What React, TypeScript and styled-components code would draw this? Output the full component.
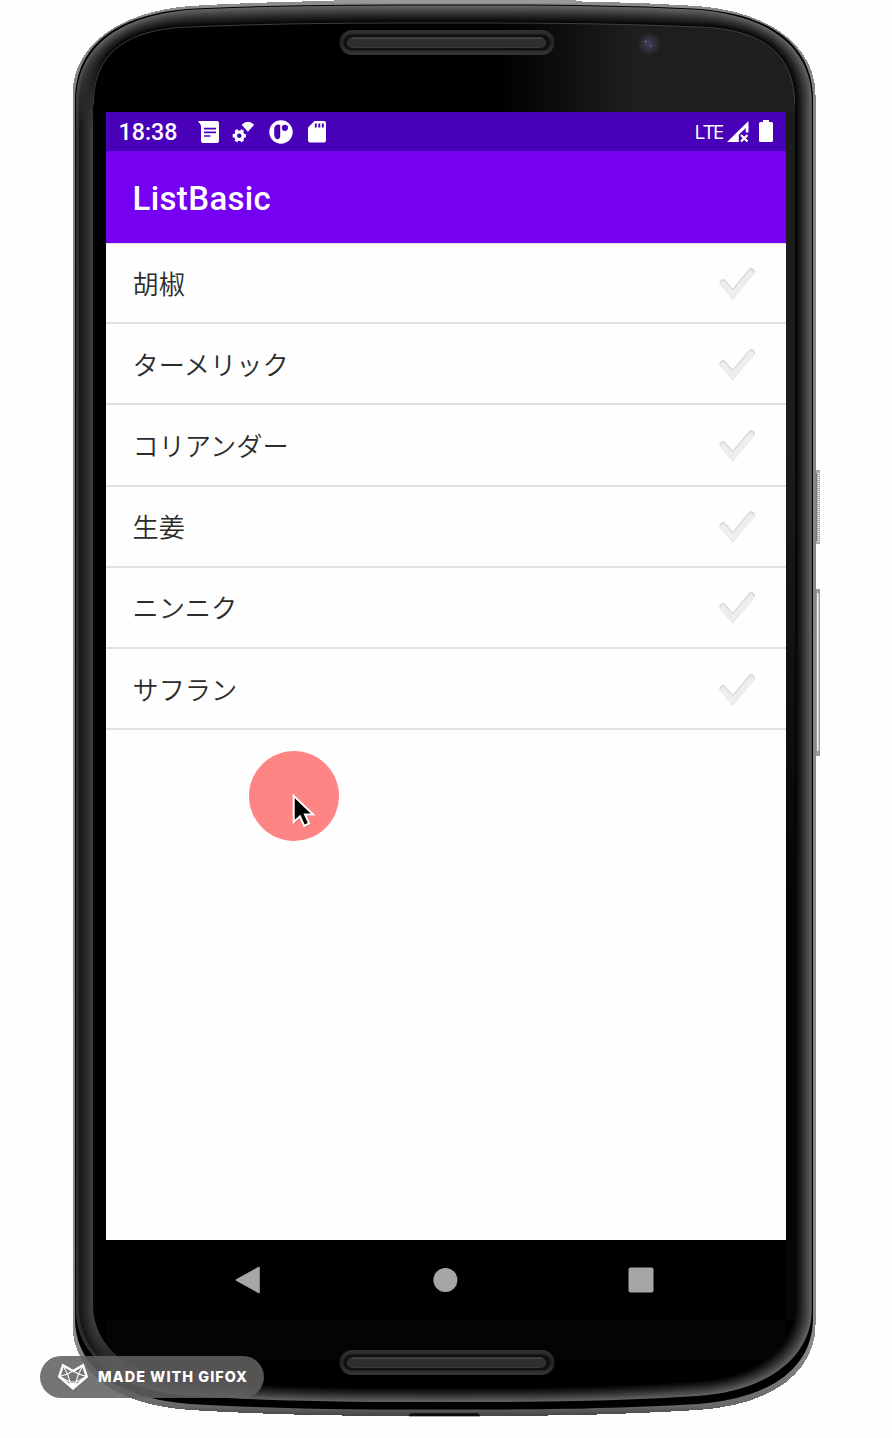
import React from "react";
import styled, { createGlobalStyle } from "styled-components";

const GlobalStyle = createGlobalStyle`
  *, *::before, *::after { box-sizing: border-box; }
  html, body { margin: 0; padding: 0; background: #fefefe; }
`;

const Stage = styled.main`
  position: relative;
  width: 892px;
  height: 1438px;
  padding: 112px 106px 0;
  overflow: hidden;
  background: #fefefe;
`;

const DeviceArt = styled.svg`
  position: absolute;
  inset: 0;
  pointer-events: none;
`;

const Screen = styled.div`
  position: relative;
  display: flex;
  flex-direction: column;
  width: 680px;
  height: 1208px;
  background: #fefefe;
  font-family: Roboto, "Noto Sans CJK JP", sans-serif;
`;

const StatusBar = styled.header`
  display: flex;
  align-items: center;
  flex: 0 0 39px;
  padding: 0 13px 0 12px;
  background: #4800b8;
  color: #fff;
`;

const Clock = styled.span`
  width: 60px;
  padding-top: 1px;
  font-size: 23.2px;
  font-weight: 500;
  line-height: 38px;
  text-indent: 0.6px;
  white-space: nowrap;
`;

const StatusIcons = styled.div`
  display: flex;
  align-items: center;
  gap: 13.5px;
  margin-left: 19.5px;
`;

const SignalGroup = styled.div`
  display: flex;
  align-items: center;
  margin-left: auto;
`;

const Network = styled.span`
  margin-right: 4px;
  font-family: "Open Sans", "Noto Sans", sans-serif;
  font-size: 20.5px;
  line-height: 38px;
  padding-bottom: 1px;
  letter-spacing: -1.7px;
`;

const AppBar = styled.div`
  display: flex;
  align-items: center;
  flex: 0 0 92px;
  padding: 3px 26.6px 0;
  background: #7600f2;
  color: #fff;
`;

const Title = styled.h1`
  margin: 0;
  font-size: 33px;
  font-weight: 500;
  line-height: 40px;
  letter-spacing: 0.35px;
`;

const List = styled.ul`
  flex: 1;
  margin: 0;
  padding: 0;
  list-style: none;
  box-shadow: inset 0 2px 1px -1px #dcdcdc;
`;

const Item = styled.li`
  display: flex;
  align-items: center;
  justify-content: space-between;
  height: 81.2px;
  padding: 0 30px 0 26.5px;
  border-bottom: 2px solid #e1e1e1;
  color: #2c2c2c;
  font-family: "Noto Sans CJK JP", sans-serif;
  font-size: 26.2px;
  font-weight: 350;
  line-height: 38px;
`;

const NavBar = styled.nav`
  display: flex;
  align-items: center;
  justify-content: center;
  gap: 170.5px;
  flex: 0 0 80px;
  padding: 0 3px 1px 0;
  background: #000;
`;

const Pointer = styled.div`
  position: absolute;
  left: 249px;
  top: 751px;
  width: 90px;
  height: 90px;
  border-radius: 50%;
  background: #ff8585;
`;

const Cursor = styled.svg`
  position: absolute;
  left: 40px;
  top: 38px;
`;

const Watermark = styled.div`
  position: absolute;
  left: 40px;
  top: 1356px;
  display: flex;
  align-items: center;
  width: 224px;
  height: 42px;
  padding: 0 0 1px 17px;
  border-radius: 21px;
  background: rgba(96, 96, 96, 0.87);
  color: #fff;
  font-family: Inter, sans-serif;
  font-size: 14.4px;
  font-weight: 800;
  letter-spacing: 1.03px;
  white-space: nowrap;
`;

const FoxLogo = styled.svg`
  flex: none;
  margin-right: 9px;
`;

const CX = 444;

type Shape = {
  l: number; yt: number; a: number; bx: number; by: number; sx: number; sy: number; top: number;
  yb: number; c: number; dx: number; dy: number; ey: number; bot: number;
};

const body: Shape = { l: 72.5, yt: 95, a: 48, bx: 115, by: 12, sx: 190, sy: 6, top: 0.5, yb: 1325, c: 1370, dx: 113, dy: 1405, ey: 1410, bot: 1416 };
const seam: Shape = { l: 75, yt: 100, a: 48, bx: 113, by: 13, sx: 195, sy: 8.5, top: 4.5, yb: 1318, c: 1365, dx: 113, dy: 1398, ey: 1404, bot: 1409.5 };
const rim: Shape = { l: 76.2, yt: 101, a: 50, bx: 115, by: 14.5, sx: 195, sy: 9.5, top: 5.5, yb: 1310, c: 1355, dx: 118, dy: 1391, ey: 1396, bot: 1402 };
const glass: Shape = { l: 93, yt: 105, a: 58, bx: 120, by: 29, sx: 190, sy: 27, top: 23, yb: 1305, c: 1345, dx: 128, dy: 1377, ey: 1381, bot: 1388 };

function outline(s: Shape) {
  const m = (x: number) => 2 * CX - x;
  return [
    `M${s.l} ${s.yt}`,
    `C${s.l} ${s.a} ${s.bx} ${s.by} ${s.sx} ${s.sy}`,
    `C280 ${s.top} 360 ${s.top} ${CX} ${s.top}`,
    `C${m(360)} ${s.top} ${m(280)} ${s.top} ${m(s.sx)} ${s.sy}`,
    `C${m(s.bx)} ${s.by} ${m(s.l)} ${s.a} ${m(s.l)} ${s.yt}`,
    `V${s.yb}`,
    `C${m(s.l)} ${s.c} ${m(s.dx)} ${s.dy} ${m(190)} ${s.ey}`,
    `C${m(290)} ${s.bot} ${m(360)} ${s.bot} ${CX} ${s.bot}`,
    `C360 ${s.bot} 290 ${s.bot} 190 ${s.ey}`,
    `C${s.dx} ${s.dy} ${s.l} ${s.c} ${s.l} ${s.yb}`,
    "Z",
  ].join(" ");
}

function between(a: Shape, b: Shape, t: number): Shape {
  const out = {} as Shape;
  (Object.keys(a) as (keyof Shape)[]).forEach((k) => {
    out[k] = a[k] + (b[k] - a[k]) * t;
  });
  return out;
}

const STEPS = 18;
const rings = Array.from({ length: STEPS }, (_, i) => i / STEPS);
const grey = (v: number) => `rgb(${Math.round(v)},${Math.round(v)},${Math.round(v)})`;

function Speaker({ y }: { y: number }) {
  return (
    <g>
      <rect x="339.5" y={y} width="215" height="25" rx="12.5" fill="url(#slot)" />
      <rect x="343.5" y={y + 4.5} width="207" height="16" rx="8" fill="#111" />
      <rect x="347.5" y={y + 8} width="198" height="9.5" rx="4.7" fill="#2f2f2f" stroke="#3a3a3a" strokeWidth="1" />
      <path d={`M352 ${y + 8}H542`} stroke="#505050" strokeWidth="1" />
    </g>
  );
}

function Device() {
  return (
    <DeviceArt width="892" height="1438" viewBox="0 0 892 1438" aria-hidden="true">
      <defs>
        <linearGradient id="shell" x1="0" x2="0" y1="0" y2="1">
          <stop offset="0" stopColor="#8d8d8d" />
          <stop offset="0.06" stopColor="#858585" />
          <stop offset="0.95" stopColor="#8a8a8a" />
          <stop offset="0.993" stopColor="#686868" />
          <stop offset="1" stopColor="#444" />
        </linearGradient>
        <linearGradient id="leftFade" gradientUnits="userSpaceOnUse" x1="92" x2="165" y1="0" y2="0">
          <stop offset="0" stopColor="#fff" />
          <stop offset="1" stopColor="#000" />
        </linearGradient>
        <linearGradient id="topFade" gradientUnits="userSpaceOnUse" x1="0" x2="0" y1="40" y2="130">
          <stop offset="0" stopColor="#000" />
          <stop offset="1" stopColor="#000" stopOpacity="0" />
        </linearGradient>
        <mask id="leftMask" maskUnits="userSpaceOnUse" x="0" y="0" width="892" height="1438">
          <rect x="0" y="0" width="170" height="1395" fill="url(#leftFade)" />
          <rect x="0" y="0" width="170" height="130" fill="url(#topFade)" />
        </mask>
        <linearGradient id="shine" gradientUnits="userSpaceOnUse" x1="500" x2="630" y1="0" y2="0">
          <stop offset="0" stopColor="#1e1e1e" stopOpacity="0" />
          <stop offset="1" stopColor="#1e1e1e" />
        </linearGradient>
        <linearGradient id="shineDown" gradientUnits="userSpaceOnUse" x1="0" x2="0" y1="450" y2="900">
          <stop offset="0" stopColor="#1c1c1c" />
          <stop offset="1" stopColor="#050505" />
        </linearGradient>
        <linearGradient id="slot" x1="0" x2="0" y1="0" y2="1">
          <stop offset="0" stopColor="#303030" />
          <stop offset="0.5" stopColor="#242424" />
          <stop offset="1" stopColor="#343434" />
        </linearGradient>
        <radialGradient id="lens">
          <stop offset="0" stopColor="#45405a" />
          <stop offset="0.45" stopColor="#35323f" />
          <stop offset="0.75" stopColor="#292929" />
          <stop offset="1" stopColor="#1e1e1e" />
        </radialGradient>
        <clipPath id="glassClip"><path d={outline(glass)} /></clipPath>
      </defs>
      <g>
        <rect x="815" y="470" width="5" height="74" fill="#aaa" />
        <path d="M818.5 473V542" stroke="#eee" strokeWidth="2" strokeDasharray="1 1" />
        <path d="M816.5 473V541" stroke="#777" strokeWidth="1" />
        <rect x="815" y="589" width="5" height="167" fill="#999" />
        <path d="M817.8 593V751" stroke="#eee" strokeWidth="1.6" />
      </g>
      <path d={outline(body)} fill="url(#shell)" shapeRendering="crispEdges" />
      <path d="M334 0H576V3H334Z" fill="#999" />
      <path d={outline(seam)} fill="#000" />
      {rings.map((t) => (
        <path key={t} d={outline(between(rim, glass, t))} fill={grey(96 * Math.pow(1 - t, 1.15) + 2)} />
      ))}
      <g mask="url(#leftMask)">
        {rings.map((t) => (
          <path key={t} d={outline(between(rim, glass, t))} fill={grey(t < 0.15 ? 46 : 14 + 52 * t)} />
        ))}
      </g>
      <path d={outline(glass)} fill="#000" />
      <g clipPath="url(#glassClip)">
        <rect x="500" y="22" width="300" height="92" fill="url(#shine)" />
        <rect x="786" y="112" width="10" height="1208" fill="url(#shineDown)" />
        <rect x="106" y="1320" width="680" height="40" fill="#040404" />
      </g>
      <path d="M93.4 105C93.4 58 120 29 190 27C280 23 360 23 444 23C528 23 608 23 698 27C768 29 794.6 58 794.6 105" fill="none" stroke="#454545" strokeWidth="0.9" />
      <Speaker y={30} />
      <Speaker y={1350} />
      <circle cx="649" cy="44" r="12" fill="url(#lens)" />
      <circle cx="645.5" cy="41.5" r="1.1" fill="#7770c0" />
      <circle cx="651" cy="46" r="1" fill="#5b548c" />
      <path d="M409 1416V1415Q410 1413.3 412 1413.3H477Q479 1413.3 480 1416Z" fill="#090909" stroke="#222" strokeWidth="0.7" />
    </DeviceArt>
  );
}

function NoteIcon() {
  return (
    <svg width="21" height="22" viewBox="0 0 21 22">
      <path d="M0 0H19Q21 0 21 2V20Q21 22 19 22H5Q3 22 3 20V4.5Z" fill="#fff" />
      <path d="M6 7.7H18M6 11.3H18M6 15H12.5" stroke="#4800b8" strokeWidth="1.7" />
    </svg>
  );
}

function GearWifiIcon() {
  return (
    <svg width="23" height="22" viewBox="0 0 23 22">
      <path d="M9.6 3.7Q16-2 22.2 3.7L15.9 10.8Z" fill="#fff" />
      <g fill="none" stroke="#fff" transform="translate(7.3 14.7)">
        <circle r="3.8" strokeWidth="3" />
        <path d="M-6.6 0H-4M6.6 0H4M-3.3-5.8L-2.2-3.9M3.3-5.8L2.2-3.9M-3.3 5.8L-2.2 3.9M3.3 5.8L2.2 3.9" strokeWidth="3.4" />
      </g>
    </svg>
  );
}

function CircleIcon() {
  return (
    <svg width="24" height="24" viewBox="0 0 24 24">
      <circle cx="12" cy="12" r="11.7" fill="#fff" />
      <path d="M11.2 5.2V15.8C11.2 21 5.2 20 5.2 14.5V9.5C5.2 4 9.5 3.6 11.2 5.2Z" fill="#4800b8" />
      <circle cx="15.9" cy="7.8" r="3.1" fill="#4800b8" />
    </svg>
  );
}

function SdIcon() {
  return (
    <svg width="20" height="22" viewBox="-2 0 20 22">
      <path d="M6.5 0H16Q18 0 18 2V19.5Q18 21.5 16 21.5H2Q0 21.5 0 19.5V6.5Z" fill="#fff" />
      <path d="M7.8 2.4V6.5M11.3 2.4V6.5M14.8 2.4V6.5" stroke="#4800b8" strokeWidth="1.9" />
    </svg>
  );
}

const SignalSvg = styled.svg`
  margin-right: 10.5px;
`;

function SignalIcon() {
  return (
    <SignalSvg width="22" height="22" viewBox="0 0 22 22">
      <path d="M0 21L21.5 0V11.5H18.7V7L11.8 13.7V21Z" fill="#fff" />
      <path d="M14 14L20.5 20.5M20.5 14L14 20.5" stroke="#fff" strokeWidth="2.4" />
    </SignalSvg>
  );
}

function BatteryIcon() {
  return (
    <svg width="14" height="24" viewBox="0 0 14 24">
      <path d="M4 0H10V2H12.5Q14 2 14 3.5V20.5Q14 22 12.5 22H1.5Q0 22 0 20.5V3.5Q0 2 1.5 2H4Z" fill="#fff" />
    </svg>
  );
}

function CheckMark() {
  return (
    <svg width="38" height="34" viewBox="0 0 38 34">
      <path d="M5 16.8L14.7 28L33.3 5.8" fill="none" stroke="#d9d9d9" strokeWidth="7" strokeLinecap="round" strokeLinejoin="miter" />
      <path d="M5.2 18L14.7 28.8L33 7.2" fill="none" stroke="#eeeeee" strokeWidth="5.6" strokeLinecap="round" strokeLinejoin="round" />
    </svg>
  );
}

const spices = ["胡椒", "ターメリック", "コリアンダー", "生姜", "ニンニク", "サフラン"];

export default function App() {
  return (
    <>
      <GlobalStyle />
      <Stage>
        <Device />
        <Screen>
          <StatusBar>
            <Clock>18:38</Clock>
            <StatusIcons>
              <NoteIcon />
              <GearWifiIcon />
              <CircleIcon />
              <SdIcon />
            </StatusIcons>
            <SignalGroup>
              <Network>LTE</Network>
              <SignalIcon />
              <BatteryIcon />
            </SignalGroup>
          </StatusBar>
          <AppBar>
            <Title>ListBasic</Title>
          </AppBar>
          <List>
            {spices.map((name) => (
              <Item key={name}>
                <span>{name}</span>
                <CheckMark />
              </Item>
            ))}
          </List>
          <NavBar>
            <svg width="26" height="28" viewBox="0 0 26 28">
              <path d="M1.5 14L24 1.5V26.5Z" fill="#a6a6a6" stroke="#a6a6a6" strokeWidth="1.6" strokeLinejoin="round" />
            </svg>
            <svg width="26" height="26" viewBox="0 0 26 26">
              <circle cx="13.4" cy="13" r="12" fill="#a6a6a6" />
            </svg>
            <svg width="26" height="26" viewBox="0 0 26 26">
              <rect x="0.5" y="0.5" width="25" height="25" rx="2" fill="#a6a6a6" />
            </svg>
          </NavBar>
        </Screen>
        <Pointer>
          <Cursor width="32" height="44" viewBox="0 0 32 44">
            <path d="M5 5.5V34.5L11.4 28.8L15.8 38L21.8 35.2L17.5 26.5H26.5Z" transform="translate(.5 .5)" fill="rgba(90,0,0,.2)" />
            <path d="M4.7 6.8V33L11 27.3L15.2 36.8L20.2 34.5L16 25.5H24.2Z" fill="#000" stroke="#fff" strokeWidth="2" />
          </Cursor>
        </Pointer>
        <Watermark>
          <FoxLogo width="32" height="28" viewBox="0 0 32 28" fill="none" stroke="#fff">
            <path d="M6 2.2L16 8L26 2.2L29.8 13.5L16 25.5L2.2 13.5Z" strokeWidth="2.4" />
            <path d="M6 2.5L10.5 11L16 8L21.5 11L26 2.5M2.5 13.5L10.5 11L13 19L16 25L19 19L21.5 11L29.5 13.5M2.5 13.5L13 19H19L29.5 13.5" strokeWidth="1.1" />
            <path d="M12.5 20.5H19.5L16 26Z" fill="#fff" />
          </FoxLogo>
          <span>MADE WITH GIFOX</span>
        </Watermark>
      </Stage>
    </>
  );
}
